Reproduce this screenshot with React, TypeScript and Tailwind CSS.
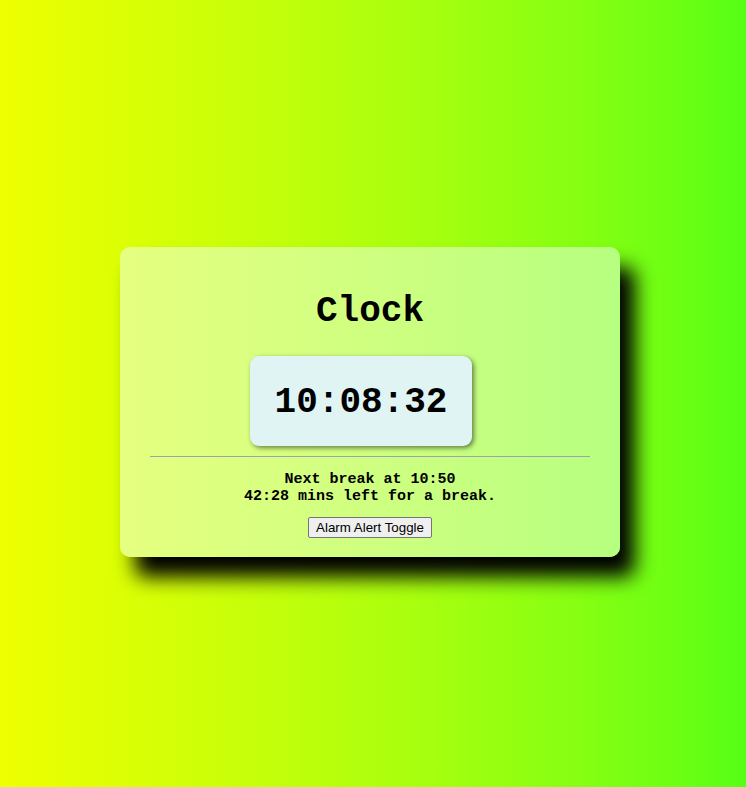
const mono = { fontFamily: '"Liberation Mono", "DejaVu Sans Mono", monospace' }

const App: React.FC = () => {
    const time = "10:08:32"
    const nextBreak = "10:50"
    const left = "42:28"

    return (
        <div className="w-full h-[787px] bg-gradient-to-r from-[#eeff00] to-[#55ff15] pt-[247px] pl-[120px] overflow-hidden">
            <div className="w-[500px] rounded-[10px] bg-gradient-to-r from-[#e6ff80] to-[#b6ff80] shadow-[15px_20px_20px_black] px-[30px] pt-[44px] pb-[19px] flex flex-col">
                <h1 className="text-center text-[36px] leading-[41px] font-bold text-black" style={mono}>
                    Clock
                </h1>
                <div className="mt-[24px] ml-[100px] w-[222px] h-[90px] rounded-[9px] bg-[#e0f4f4] shadow-[2px_2px_5px_rgba(0,0,0,0.5)] flex items-center justify-center">
                    <span className="text-[36px] leading-[41px] font-bold text-black pt-[2px]" style={mono}>
                        {time}
                    </span>
                </div>
                <hr className="mt-[10px] border-0 border-t border-[#a0a0b0]" />
                <div className="mt-[14px] text-center text-[15px] leading-[17px] font-bold text-black" style={mono}>
                    <div>Next break at {nextBreak}</div>
                    <div>{left} mins left for a break.</div>
                </div>
                <div className="mt-[12px] flex justify-center">
                    <button
                        className="h-[21px] px-[7px] bg-[#efefef] border border-[#767676] rounded-[2px] text-[13.33px] leading-[16px] text-black"
                        style={{ fontFamily: '"Liberation Sans", Arial, sans-serif' }}
                    >
                        Alarm Alert Toggle
                    </button>
                </div>
            </div>
        </div>
    )
}

export default App
